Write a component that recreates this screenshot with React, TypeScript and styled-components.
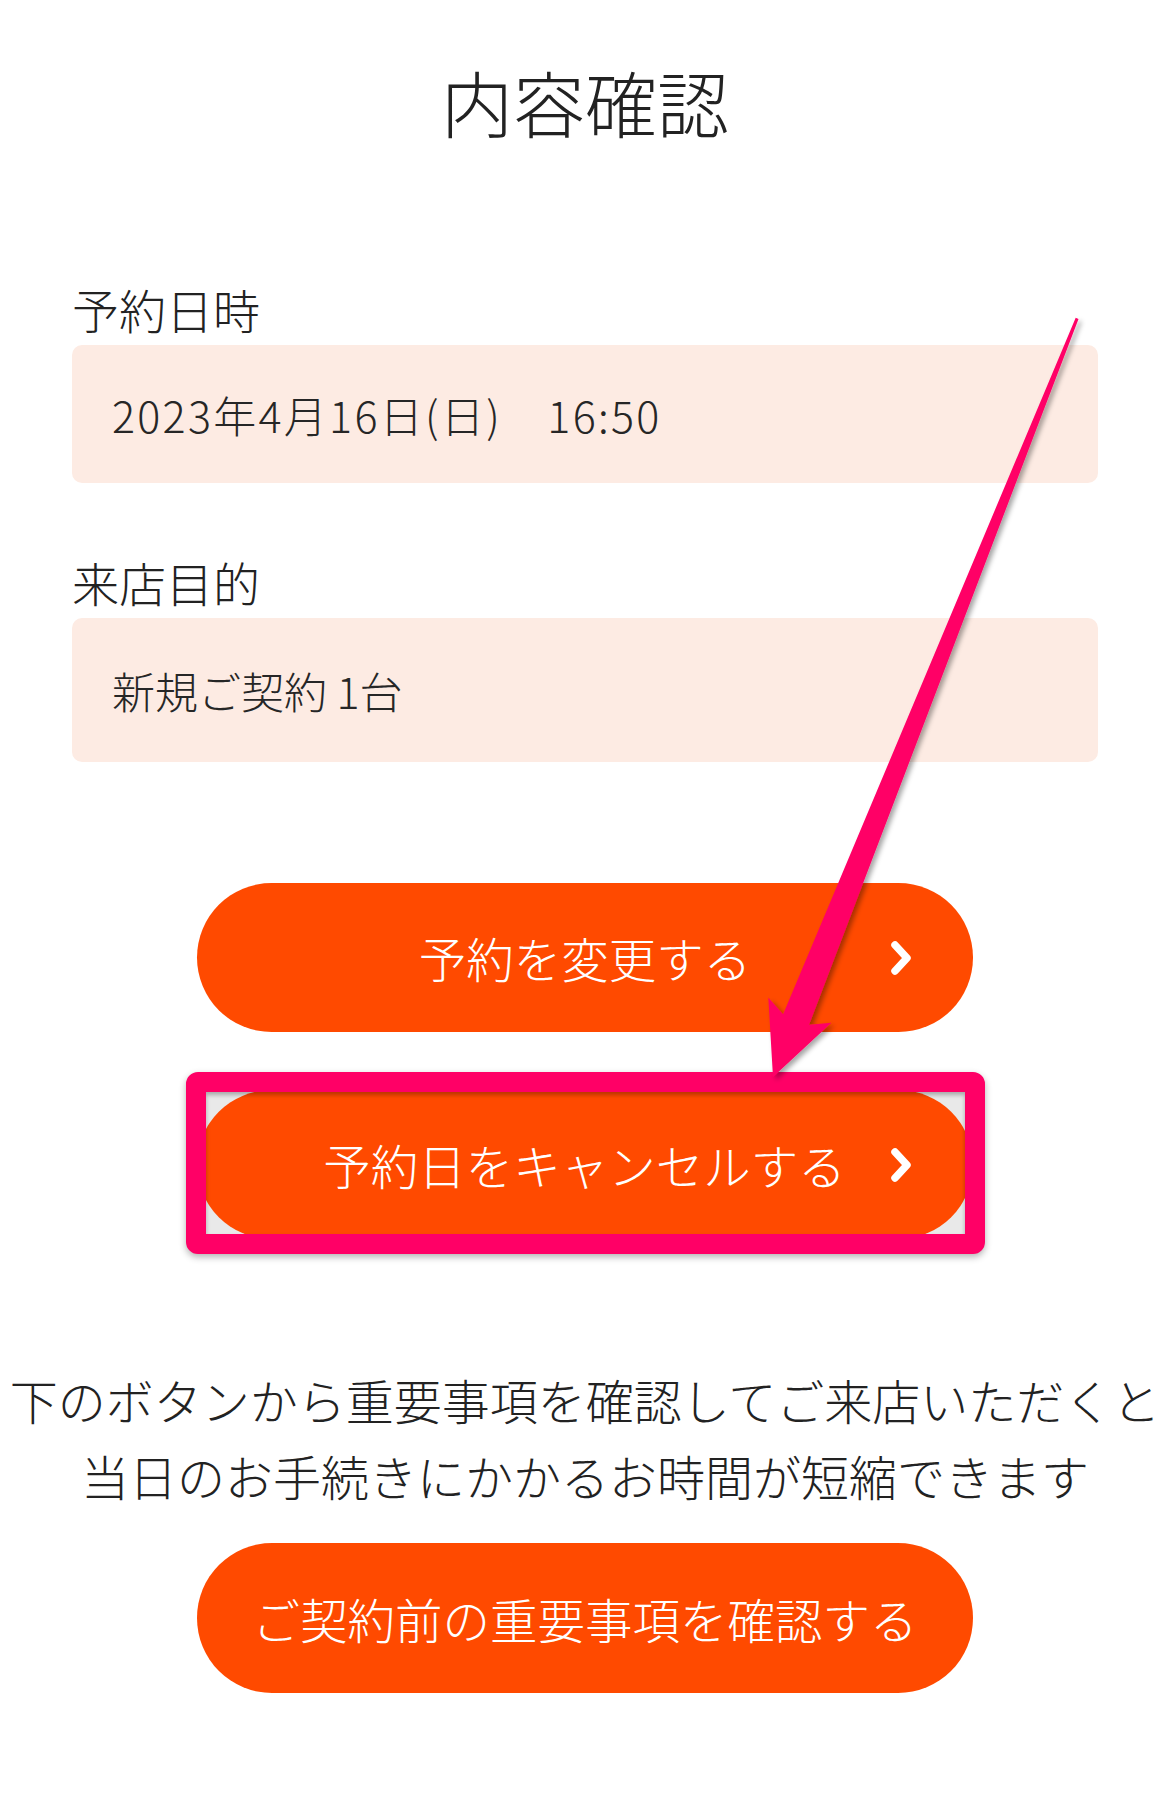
import React from 'react';
import styled, { createGlobalStyle } from 'styled-components';

const GlobalStyle = createGlobalStyle`
  html, body {
    margin: 0;
    padding: 0;
    background: #ffffff;
  }
  body {
    font-family: "Noto Sans CJK JP", "Noto Sans", sans-serif;
    font-weight: 300;
    color: #222222;
  }
`;

const Page = styled.div`
  position: relative;
  width: 1170px;
  height: 1808px;
  display: flex;
  flex-direction: column;
  align-items: center;
  overflow: hidden;
`;

const Title = styled.h1`
  margin: 65px 0 0;
  font-size: 72px;
  line-height: 72px;
  font-weight: 300;
  color: #222;
`;

const Details = styled.section`
  width: 100%;
  box-sizing: border-box;
  padding: 0 72px;
  margin-top: 148px;
  display: flex;
  flex-direction: column;
`;

const Label = styled.div<{ $gap?: number }>`
  margin-top: ${p => p.$gap ?? 0}px;
  font-size: 47px;
  line-height: 47px;
  color: #222;
`;

const InfoBox = styled.div<{ $h: number; $spacing?: number }>`
  margin-top: 13px;
  height: ${p => p.$h}px;
  box-sizing: border-box;
  padding: 0 40px;
  display: flex;
  align-items: center;
  background: #fdebe3;
  border-radius: 10px;
  font-size: 43px;
  letter-spacing: ${p => p.$spacing ?? 0}px;
  color: #262626;
`;

const Actions = styled.div`
  margin-top: 121px;
  display: flex;
  flex-direction: column;
  align-items: center;
`;

const PillButton = styled.button`
  position: relative;
  flex-shrink: 0;
  width: 776px;
  height: 149px;
  border: none;
  border-radius: 75px;
  background: #ff4a00;
  color: #ffffff;
  font-family: inherit;
  font-size: 47.5px;
  font-weight: 300;
  display: flex;
  align-items: center;
  justify-content: center;
  padding: 0;
  cursor: pointer;
`;

const Chevron = styled.svg`
  position: absolute;
  right: 59px;
  top: 50%;
  transform: translateY(-50%);
`;

const Highlight = styled.div`
  position: relative;
  margin-top: 40px;
  width: 799px;
  box-sizing: border-box;
  border: 20px solid #ff0066;
  border-radius: 12px;
  background: #e9e9e9;
  overflow: hidden;
  display: flex;
  box-shadow: 0 3px 7px rgba(0, 0, 0, 0.3);

  ${PillButton} {
    margin: -2px -8px -5px -9px;
  }

  &::after {
    content: '';
    position: absolute;
    inset: 0;
    box-shadow: inset 0 3px 4px rgba(0, 0, 0, 0.28);
    pointer-events: none;
  }
`;

const Notice = styled.p`
  margin: 107px 0 0;
  width: 100%;
  text-align: center;
  font-size: 48px;
  line-height: 76px;
  color: #222;
  white-space: nowrap;
`;

const BottomButton = styled(PillButton)`
  margin-top: 30px;
  height: 150px;
`;

const ArrowLayer = styled.svg`
  position: absolute;
  top: 0;
  left: 0;
  pointer-events: none;
  z-index: 5;
`;

const ChevronIcon = () => (
  <Chevron width="26" height="36" viewBox="0 0 26 36">
    <polyline
      points="7,5 19,18 7,31"
      fill="none"
      stroke="#ffffff"
      strokeWidth="7.5"
      strokeLinecap="round"
      strokeLinejoin="round"
    />
  </Chevron>
);

export default function App() {
  return (
    <>
      <GlobalStyle />
      <Page>
        <Title>内容確認</Title>

        <Details>
          <Label>予約日時</Label>
          <InfoBox $h={138} $spacing={2.3}>2023年4月16日(日)　16:50</InfoBox>

          <Label $gap={75}>来店目的</Label>
          <InfoBox $h={144}>新規ご契約 1台</InfoBox>
        </Details>

        <Actions>
          <PillButton>
            予約を変更する
            <ChevronIcon />
          </PillButton>

          <Highlight>
            <PillButton>
              予約日をキャンセルする
              <ChevronIcon />
            </PillButton>
          </Highlight>
        </Actions>

        <Notice>
          下のボタンから重要事項を確認してご来店いただくと
          <br />
          当日のお手続きにかかるお時間が短縮できます
        </Notice>

        <BottomButton>ご契約前の重要事項を確認する</BottomButton>

        <ArrowLayer width="1170" height="1808" viewBox="0 0 1170 1808">
          <defs>
            <filter id="arrowShadow" x="-20%" y="-5%" width="140%" height="110%">
              <feDropShadow dx="3" dy="3" stdDeviation="2.5" floodColor="#000" floodOpacity="0.35" />
            </filter>
          </defs>
          <polygon
            points="1075.7,317.7 1078.5,318.9 809.1,1024.7 831.4,1022.8 773,1077 768.3,997.5 783.1,1014.3"
            fill="#ff0066"
            filter="url(#arrowShadow)"
          />
        </ArrowLayer>
      </Page>
    </>
  );
}
